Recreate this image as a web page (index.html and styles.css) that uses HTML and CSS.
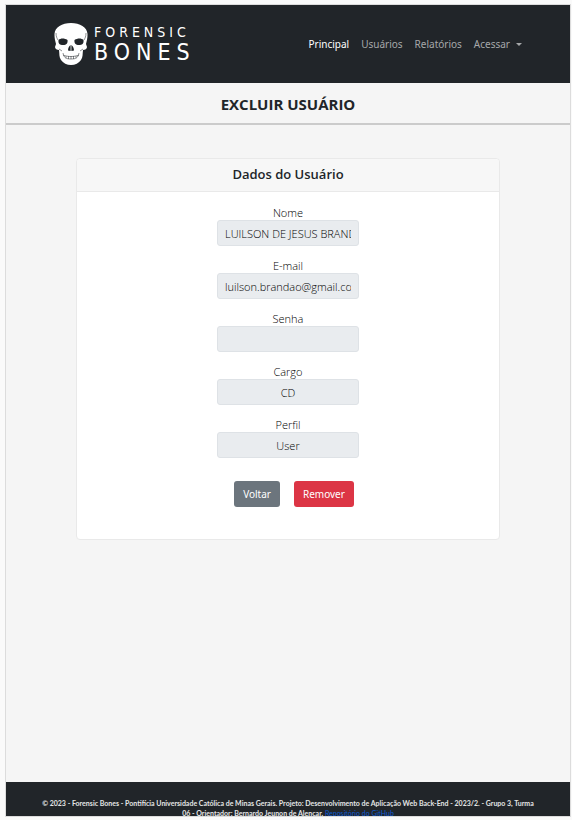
FILE: index.html
```html
<!DOCTYPE html>
<html lang="pt-br">
<head>
<meta charset="utf-8">
<meta name="viewport" content="width=device-width, initial-scale=1">
<title>Excluir Usuário - Forensic Bones</title>
<link rel="stylesheet" href="styles.css">
</head>
<body>
<div class="page">
  <header class="navbar">
    <a class="brand" href="#" aria-label="Forensic Bones">
      <svg class="skull" viewBox="0 0 34 42" aria-hidden="true">
        <path fill="#fff" d="M17 0C8 0 1 4 .5 11c-.2 4 .8 7 1.500 10L1 24c0 2 2 3 4 3 .5 4 0 7 2 10 2 3 6 5 10 5s8-2 10-5c2-3 1.500-6 2-10 2 0 4-1 4-3l-1-3c.7-3 1.700-6 1.500-10C33 4 26 0 17 0z"/>
        <path fill="#212529" d="M4.500 17c2-2 6-2 9 0 .5 3-1 5-4.500 5-3 0-5-1-4.500-5zM29.500 17c-2-2-6-2-9 0-.5 3 1 5 4.500 5 3 0 5-1 4.500-5zM16.600 22c-1.500 1-2.600 3-2.600 5.500l2.600.5zM17.400 22c1.500 1 2.600 3 2.600 5.500l-2.600.5z"/>
        <path fill="none" stroke="#212529" stroke-width=".5" d="M2 10c0 4 1 5 2 7M32 10c0 4-1 5-2 7M5 26l3 2M29 26l-3 2M9 30c1 5 3 6 8 6s7-1 8-6M9 32c5 2 11 2 16 0M12 33v2M14.500 33v3M17 33v3M19.500 33v3M22 33v2"/>
      </svg>
      <span class="wordmark">
        <span class="wordmark-top">FORENSIC</span>
        <span class="wordmark-bottom">BONES</span>
      </span>
    </a>
    <nav class="links">
      <a class="active" href="#">Principal</a>
      <a href="#">Usuários</a>
      <a href="#">Relatórios</a>
      <a class="dropdown" href="#">Acessar</a>
    </nav>
  </header>
  <h1 class="title">EXCLUIR USUÁRIO</h1>
  <main class="content">
    <section class="card">
      <h2 class="card-header">Dados do Usuário</h2>
      <form class="card-body">
        <div class="field"><label for="nome">Nome</label><input id="nome" type="text" value="LUILSON DE JESUS BRANDÃO" readonly></div>
        <div class="field"><label for="email">E-mail</label><input id="email" type="email" value="luilson.brandao@gmail.com" readonly></div>
        <div class="field"><label for="senha">Senha</label><input id="senha" type="password" readonly></div>
        <div class="field"><label for="cargo">Cargo</label><input id="cargo" type="text" value="CD" readonly></div>
        <div class="field"><label for="perfil">Perfil</label><input id="perfil" type="text" value="User" readonly></div>
        <div class="actions">
          <button class="btn back" type="button">Voltar</button>
          <button class="btn remove" type="submit">Remover</button>
        </div>
      </form>
    </section>
  </main>
  <footer class="footer">
    <p>© 2023 - Forensic Bones - Pontifícia Universidade Católica de Minas Gerais. Projeto: Desenvolvimento de Aplicação Web Back-End - 2023/2. - Grupo 3, Turma<br>06 - Orientador: Bernardo Jeunon de Alencar. <a href="#">Repositório do GitHub</a></p>
  </footer>
</div>
</body>
</html>
```
FILE: styles.css
```css
* { box-sizing: border-box; }
body {
  margin: 0;
  min-height: 100vh;
  padding: 4px 1px 3px 5px;
  display: flex;
  background: #fafafa;
  color: #212529;
  font-family: "Open Sans", "Noto Sans", sans-serif;
  font-size: 11px;
}
.page {
  flex: 1;
  min-width: 0;
  display: flex;
  flex-direction: column;
  border: 1px solid #dcdcdc;
  background: #f5f5f5;
}
.navbar {
  height: 78px;
  padding: 0 48px;
  display: flex;
  align-items: center;
  justify-content: space-between;
  background: #212529;
}
.brand {
  display: flex;
  align-items: center;
  gap: 6px;
  color: #fff;
  text-decoration: none;
}
.skull { width: 34px; height: 42px; }
.wordmark {
  display: flex;
  flex-direction: column;
  gap: 2px;
  font-family: "Liberation Sans Narrow", "DejaVu Sans Condensed", sans-serif;
}
.wordmark-top { font-size: 14px; line-height: 14px; letter-spacing: 4px; }
.wordmark-bottom { font-size: 23px; line-height: 22px; letter-spacing: 6px; }
.links {
  display: flex;
  gap: 12px;
  font-family: "Noto Sans", sans-serif;
  font-size: 10px;
}
.links a { color: #a6a8a9; text-decoration: none; }
.links .active { color: #fff; }
.dropdown::after {
  content: "";
  display: inline-block;
  margin-left: 6px;
  vertical-align: 2px;
  border: 3px solid transparent;
  border-top-color: currentColor;
  border-bottom: 0;
}
.title {
  margin: 0;
  height: 42px;
  border-bottom: 2px solid #cbcbcb;
  font-size: 15px;
  line-height: 42px;
  font-weight: 700;
  text-align: center;
}
.content { flex: 1; padding: 33px 70px; }
.card {
  min-height: 382px;
  border: 1px solid #e9e9e9;
  border-radius: 4px;
  background: #fff;
}
.card-header {
  margin: 0;
  border-bottom: 1px solid #e9e9e9;
  border-radius: 4px 4px 0 0;
  background: #f7f7f7;
  font-size: 13px;
  line-height: 30px;
  padding-bottom: 2px;
  font-weight: 600;
  text-align: center;
}
.card-body {
  padding-top: 13px;
  display: flex;
  flex-direction: column;
  align-items: center;
  gap: 12px;
}
.field {
  display: flex;
  flex-direction: column;
  align-items: center;
  color: #000;
  font-weight: 300;
}
.field label { line-height: 15px; }
.field input {
  width: 142px;
  height: 26px;
  padding: 0 7px;
  border: 1px solid #dee2e6;
  border-radius: 3px;
  background: #e9ecef;
  color: inherit;
  font: inherit;
  text-align: center;
}
.actions { display: flex; gap: 14px; padding: 11px 0 0 12px; }
.btn {
  height: 26px;
  padding: 0 8px;
  border: 1px solid transparent;
  border-radius: 3px;
  color: #fff;
  font-family: "Noto Sans", sans-serif;
  font-size: 10px;
}
.back { background: #6c757d; }
.remove { background: #dc3545; }
.footer {
  height: 34px;
  padding: 16px 28px 0;
  overflow: hidden;
  background: #212529;
  color: #e4e5e6;
  font-family: Lato, sans-serif;
  font-size: 7px;
  line-height: 10px;
  font-weight: 700;
  text-align: center;
}
.footer p { margin: 0; }
.footer a { color: #0d5bd0; font-weight: 400; }
```
